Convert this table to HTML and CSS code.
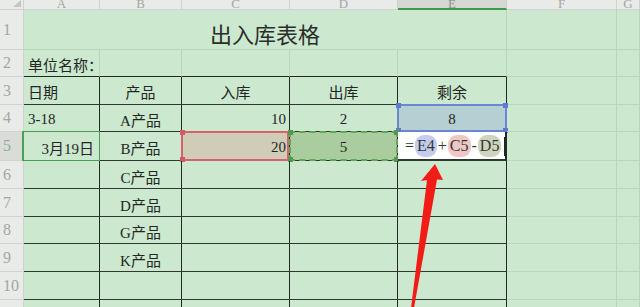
FILE: index.html
```html
<!DOCTYPE html>
<html lang="zh-CN">
<head>
  <meta charset="UTF-8">
  <meta name="viewport" content="width=device-width, initial-scale=1.0">
  <title>出入库表格</title>
  <link rel="stylesheet" href="styles.css">
</head>
<body>
  <div class="sheet">
    <!-- column letters -->
    <div class="corner"><span class="corner-mark"></span></div>
    <div class="col-head">A</div>
    <div class="col-head">B</div>
    <div class="col-head">C</div>
    <div class="col-head">D</div>
    <div class="col-head active">E</div>
    <div class="col-head">F</div>
    <div class="col-head">G</div>

    <!-- row 1 -->
    <div class="row-head">1</div>
    <div class="cell title">出入库表格</div>
    <div class="cell"></div>
    <div class="cell"></div>

    <!-- row 2 -->
    <div class="row-head">2</div>
    <div class="cell l above">单位名称：</div>
    <div class="cell above"></div>
    <div class="cell above"></div>
    <div class="cell above"></div>
    <div class="cell above"></div>
    <div class="cell"></div>
    <div class="cell"></div>

    <!-- row 3 -->
    <div class="row-head">3</div>
    <div class="cell tb l mid">日期</div>
    <div class="cell tb c mid">产品</div>
    <div class="cell tb c mid">入库</div>
    <div class="cell tb c mid">出库</div>
    <div class="cell tb c mid">剩余</div>
    <div class="cell"></div>
    <div class="cell"></div>

    <!-- row 4 -->
    <div class="row-head">4</div>
    <div class="cell tb l">3-18</div>
    <div class="cell tb c">A产品</div>
    <div class="cell tb r">10</div>
    <div class="cell tb c">2</div>
    <div class="cell tb c ref-blue">
      8
      <span class="frame frame-blue">
        <i class="knob tl"></i><i class="knob tr"></i><i class="knob bl"></i><i class="knob br"></i>
      </span>
    </div>
    <div class="cell"></div>
    <div class="cell"></div>

    <!-- row 5 -->
    <div class="row-head current">5</div>
    <div class="cell tb r date">3月19日<span class="frame frame-active"></span></div>
    <div class="cell tb c">B产品</div>
    <div class="cell tb r ref-red">
      20
      <span class="frame frame-red"><i class="knob tl"></i><i class="knob bl"></i></span>
    </div>
    <div class="cell tb c ref-green">
      5
      <span class="frame frame-dash"><i class="knob tl"></i><i class="knob bl"></i><i class="knob tr"></i><i class="knob br"></i></span>
    </div>
    <div class="cell tb editor">
      <span class="op">=</span><span class="tok tok-e">E4</span><span class="op">+</span><span class="tok tok-c">C5</span><span class="op">-</span><span class="tok tok-d">D5</span><span class="caret"></span>
    </div>
    <div class="cell"></div>
    <div class="cell"></div>

    <!-- row 6 -->
    <div class="row-head">6</div>
    <div class="cell tb"></div>
    <div class="cell tb c">C产品</div>
    <div class="cell tb"></div>
    <div class="cell tb"></div>
    <div class="cell tb"></div>
    <div class="cell"></div>
    <div class="cell"></div>

    <!-- row 7 -->
    <div class="row-head">7</div>
    <div class="cell tb"></div>
    <div class="cell tb c">D产品</div>
    <div class="cell tb"></div>
    <div class="cell tb"></div>
    <div class="cell tb"></div>
    <div class="cell"></div>
    <div class="cell"></div>

    <!-- row 8 -->
    <div class="row-head">8</div>
    <div class="cell tb"></div>
    <div class="cell tb c">G产品</div>
    <div class="cell tb"></div>
    <div class="cell tb"></div>
    <div class="cell tb"></div>
    <div class="cell"></div>
    <div class="cell"></div>

    <!-- row 9 -->
    <div class="row-head">9</div>
    <div class="cell tb"></div>
    <div class="cell tb c">K产品</div>
    <div class="cell tb"></div>
    <div class="cell tb"></div>
    <div class="cell tb"></div>
    <div class="cell"></div>
    <div class="cell"></div>

    <!-- row 10 -->
    <div class="row-head">10</div>
    <div class="cell tb"></div>
    <div class="cell tb"></div>
    <div class="cell tb"></div>
    <div class="cell tb"></div>
    <div class="cell tb"></div>
    <div class="cell"></div>
    <div class="cell"></div>

    <!-- row 11 -->
    <div class="row-head">11</div>
    <div class="cell tb"></div>
    <div class="cell tb"></div>
    <div class="cell tb"></div>
    <div class="cell tb"></div>
    <div class="cell tb"></div>
    <div class="cell"></div>
    <div class="cell"></div>

    <!-- pointer arrow -->
    <svg class="arrow" width="640" height="307" viewBox="0 0 640 307">
      <polygon points="435,164 443,180 437,179.5 414,308 411,308 427,180 421,181" fill="#f21c16"/>
    </svg>
  </div>
</body>
</html>
```

FILE: styles.css
```css
body {
  margin: 0;
  background: #cce8cf;
  font-family: "Liberation Serif", "Noto Sans CJK SC", serif;
  font-size: 16px;
  color: #232723;
}

.sheet {
  position: relative;
  width: 640px;
  height: 307px;
  overflow: hidden;
  display: grid;
  grid-template-columns: 24px 76px 82px 108px 108px 109px 110px 1fr;
  grid-template-rows: 10px 40px 27px 28px 27px 29px 28px 28px 27px 28px 28px 28px;
}

/* headers */
.corner,
.col-head,
.row-head {
  box-sizing: border-box;
  background: #e9ebe9;
  color: #a3a6a3;
  border-right: 1px solid #cfd3cf;
  border-bottom: 1px solid #cfd3cf;
}

.corner {
  position: relative;
}

.corner-mark {
  position: absolute;
  right: 2px;
  bottom: 2px;
  width: 0;
  height: 0;
  border-left: 8px solid transparent;
  border-bottom: 7px solid #c4c7c4;
}

.col-head {
  font-size: 13px;
  line-height: 7px;
  text-align: center;
  overflow: hidden;
}

.col-head.active {
  background: #d5d8d5;
  border-bottom: 2px solid #3f9b4b;
  color: #8d918d;
}

.row-head {
  font-size: 16px;
  padding-left: 3px;
  display: flex;
  align-items: center;
}

.row-head.current {
  background: #d9dcd9;
  color: #8fae92;
  border-right-color: #4ca257;
}

/* cells */
.cell {
  box-sizing: border-box;
  border-right: 1px solid #b9d7bc;
  border-bottom: 1px solid #b9d7bc;
  display: flex;
  align-items: center;
  padding-top: 3px;
  white-space: nowrap;
  position: relative;
  font-size: 15px;
}

.cell.tb {
  border-right-color: #222a22;
  border-bottom-color: #2e382e;
}

.cell.above {
  border-bottom-color: #222a22;
}

.cell.mid {
  padding-top: 1px;
}

.l { padding-left: 4px; }
.c { justify-content: center; }
.r { justify-content: flex-end; padding-right: 3px; }

.title {
  grid-column: span 5;
  justify-content: center;
  font-family: "Noto Sans CJK SC", sans-serif;
  font-size: 22px;
  padding-top: 6px;
  color: #2a2e2a;
}

.date {
  padding-right: 5px;
}

/* reference highlights while a formula is being typed */
.ref-blue { background: #b5cfd2; }
.ref-red { background: #cfccb8; }
.ref-green { background: #a9cd9f; }

.frame {
  position: absolute;
  top: -1px;
  left: -1px;
  right: -1px;
  bottom: -1px;
  box-sizing: border-box;
}

.frame-blue { border: 2px solid #6b86d6; }
.frame-red { border: 2px solid #d4636d; right: 0; }
.frame-dash { border: 2px dashed #5ea85c; }
.frame-active { border: 1px solid #46a052; left: -2px; }

.knob {
  position: absolute;
  width: 5px;
  height: 5px;
}

.frame-blue .knob { background: #5e7ad3; }
.frame-red .knob { background: #d05a66; }
.frame-dash .knob { background: #4f9a4e; }

.knob.tl { top: -3px; left: -3px; }
.knob.tr { top: -3px; right: -3px; }
.knob.bl { bottom: -3px; left: -3px; }
.knob.br { bottom: -3px; right: -3px; }

/* in-cell formula editor */
.editor {
  background: #ffffff;
  border-bottom: 2px solid #4aa456;
  border-right: 2px solid #4aa456;
  padding-left: 6px;
  padding-top: 1px;
  font-size: 16px;
  color: #333833;
}

.op {
  padding: 0 1px;
}

.tok {
  border-radius: 9px;
  padding: 2px 2px;
}

.tok-e { background: #c4ccf0; }
.tok-c { background: #efc7c5; }
.tok-d { background: #cfd4bf; }

.caret {
  width: 1px;
  height: 19px;
  background: #222;
  margin-left: 3px;
}

.arrow {
  position: absolute;
  left: 0;
  top: 0;
  pointer-events: none;
}
```
